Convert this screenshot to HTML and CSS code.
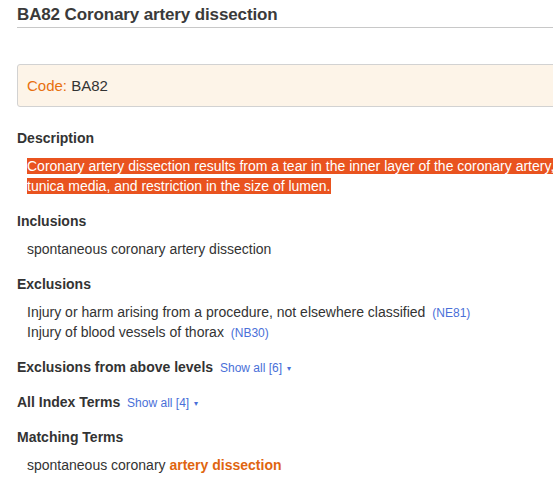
FILE: index.html
```html
<!DOCTYPE html>
<html>
<head>
<meta charset="utf-8">
<link rel="stylesheet" href="styles.css">
</head>
<body>
<div class="page">
  <h1 class="title">BA82 Coronary artery dissection</h1>
  <div class="codebox"><span class="code-label">Code:</span>&nbsp;<span class="code-value">BA82</span></div>

  <section class="sec sec-first">
    <h2 class="sec-head">Description</h2>
    <div class="sec-body"><span class="hl">Coronary artery dissection results from a tear in the inner layer of the coronary artery, with blood entering the tunica media, and restriction in the size of lumen.</span></div>
  </section>

  <section class="sec">
    <h2 class="sec-head">Inclusions</h2>
    <div class="sec-body">spontaneous coronary artery dissection</div>
  </section>

  <section class="sec">
    <h2 class="sec-head">Exclusions</h2>
    <div class="sec-body">
      <div class="item">Injury or harm arising from a procedure, not elsewhere classified <a class="ref">(NE81)</a></div>
      <div class="item">Injury of blood vessels of thorax <a class="ref">(NB30)</a></div>
    </div>
  </section>

  <section class="sec">
    <h2 class="sec-head">Exclusions from above levels <a class="show">Show all [6] <span class="caret">&#9662;</span></a></h2>
  </section>

  <section class="sec">
    <h2 class="sec-head">All Index Terms <a class="show">Show all [4] <span class="caret">&#9662;</span></a></h2>
  </section>

  <section class="sec">
    <h2 class="sec-head">Matching Terms</h2>
    <div class="sec-body">spontaneous coronary <b class="match">artery dissection</b></div>
  </section>
</div>
</body>
</html>
```
FILE: styles.css
```css
html, body {
  margin: 0;
  padding: 0;
  overflow: hidden;
  background: #fff;
}
body {
  font-family: "Liberation Sans", Arial, sans-serif;
  color: #333;
}
.page {
  width: 700px;
  padding: 0 0 0 17px;
}
.title {
  margin: 0;
  padding: 5px 0 2px 0;
  font-size: 17px;
  line-height: 20px;
  letter-spacing: -0.13px;
  font-weight: bold;
  color: #3a3a3a;
  border-bottom: 1px solid #c8c8c8;
}
.codebox {
  margin-top: 36px;
  height: 41px;
  display: flex;
  align-items: center;
  padding: 0 9px;
  background: #fdf4e8;
  border: 1px solid #d2d2d2;
  border-radius: 3px;
  font-size: 15px;
}
.code-label { color: #e8700f; }
.code-value { color: #333; }
.sec-head {
  margin: 0;
  padding-top: 15px;
  font-size: 14px;
  line-height: 20px;
  font-weight: bold;
  color: #333;
}
.sec-first .sec-head { padding-top: 21px; }
.sec-body {
  padding: 8px 0 0 10px;
  font-size: 14px;
  line-height: 20px;
}
.hl {
  background: #e9531f;
  color: #fff;
}
.ref {
  color: #4a6fd8;
  font-size: 12px;
  line-height: 1;
  margin-left: 3px;
}
.show {
  color: #4a6fd8;
  font-size: 12px;
  line-height: 1;
  font-weight: normal;
  margin-left: 3px;
}
.caret {
  font-size: 8px;
  line-height: 1;
  margin-left: 2px;
  vertical-align: 1px;
}
.match {
  color: #e0650f;
}
```
